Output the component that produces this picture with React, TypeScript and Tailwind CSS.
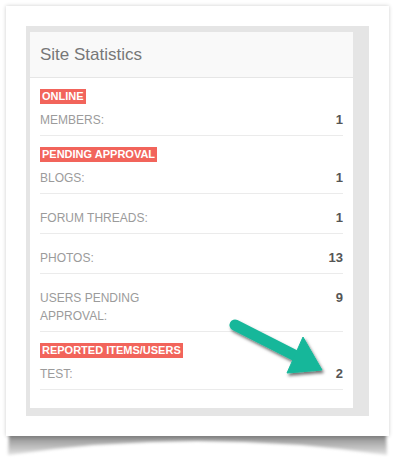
import React from "react";

type Row = { label: React.ReactNode; value: string };
type Section = { title: string; rows: Row[] };

const sections: Section[] = [
  { title: "ONLINE", rows: [{ label: "MEMBERS:", value: "1" }] },
  {
    title: "PENDING APPROVAL",
    rows: [
      { label: "BLOGS:", value: "1" },
      { label: "FORUM THREADS:", value: "1" },
      { label: "PHOTOS:", value: "13" },
      {
        label: (
          <>
            USERS PENDING
            <br />
            APPROVAL:
          </>
        ),
        value: "9",
      },
    ],
  },
  { title: "REPORTED ITEMS/USERS", rows: [{ label: "TEST:", value: "2" }] },
];

export default function App() {
  return (
    <div
      className="relative w-[403px] h-[465px] bg-white overflow-hidden"
      style={{ fontFamily: '"Liberation Sans", Arial, Helvetica, sans-serif' }}
    >
      {/* curled shadow under the frame */}
      <svg
        className="absolute left-0 top-0 pointer-events-none"
        width="403"
        height="465"
        viewBox="0 0 403 465"
      >
        <defs>
          <filter id="curlblur" x="-10%" y="-50%" width="120%" height="200%">
            <feGaussianBlur stdDeviation="1.6" />
          </filter>
          <linearGradient id="curlgrad" x1="0" x2="0" y1="0" y2="1">
            <stop offset="0" stopColor="#7a7a7a" />
            <stop offset="0.35" stopColor="#a6a6a6" />
            <stop offset="1" stopColor="#e2e2e2" />
          </linearGradient>
        </defs>
        <path
          d="M9,434 L386,434 L387,455 Q197,427 8,455 Z"
          fill="url(#curlgrad)"
          filter="url(#curlblur)"
        />
      </svg>

      <div className="relative pt-[6px] pl-[6px]">
        <div className="w-[383px] h-[430px] bg-white p-[20px] shadow-[0_0_4px_rgba(0,0,0,0.2)]">
          <div className="w-[343px] h-[390px] bg-[#e5e5e5] pt-[6px] pl-[4px]">
            <div className="w-[323px] h-[376px] bg-white">
              <div className="h-[46px] bg-[#f9f9f9] border-b border-[#e6e6e6] px-[10px] flex items-center">
                <span className="text-[17px] text-[#777777] leading-none">
                  Site Statistics
                </span>
              </div>
              <div className="px-[10px]">
                {sections.map((s) => (
                  <div key={s.title}>
                    <div className="mt-[11px] flex">
                      <span className="bg-[#f2645b] text-white font-bold text-[11px] leading-[15px] h-[15px] px-[2px]">
                        {s.title}
                      </span>
                    </div>
                    {s.rows.map((r, i) => (
                      <div
                        key={i}
                        className={
                          "flex justify-between items-start border-b border-[#ebebeb] pb-[6px] " +
                          (i === 0 ? "pt-[7px]" : "pt-[15px]")
                        }
                      >
                        <span className="text-[12px] leading-[18px] text-[#9b9b9b]">
                          {r.label}
                        </span>
                        <span className="text-[13px] leading-[18px] font-bold text-[#555555]">
                          {r.value}
                        </span>
                      </div>
                    ))}
                  </div>
                ))}
              </div>
            </div>
          </div>
        </div>
      </div>

      {/* annotation arrow */}
      <svg
        className="absolute left-0 top-0 pointer-events-none"
        width="403"
        height="465"
        viewBox="0 0 403 465"
      >
        <defs>
          <filter id="arrowshadow" x="-20%" y="-20%" width="140%" height="140%">
            <feDropShadow dx="1.5" dy="2.5" stdDeviation="1.6" floodColor="#000" floodOpacity="0.55" />
          </filter>
        </defs>
        <g filter="url(#arrowshadow)" fill="#17b79a" stroke="#17b79a">
          <line x1="235" y1="325" x2="298" y2="357" strokeWidth="11" strokeLinecap="round" />
          <polygon points="303,337 322,370 287,373" strokeWidth="1" strokeLinejoin="round" />
        </g>
      </svg>
    </div>
  );
}
